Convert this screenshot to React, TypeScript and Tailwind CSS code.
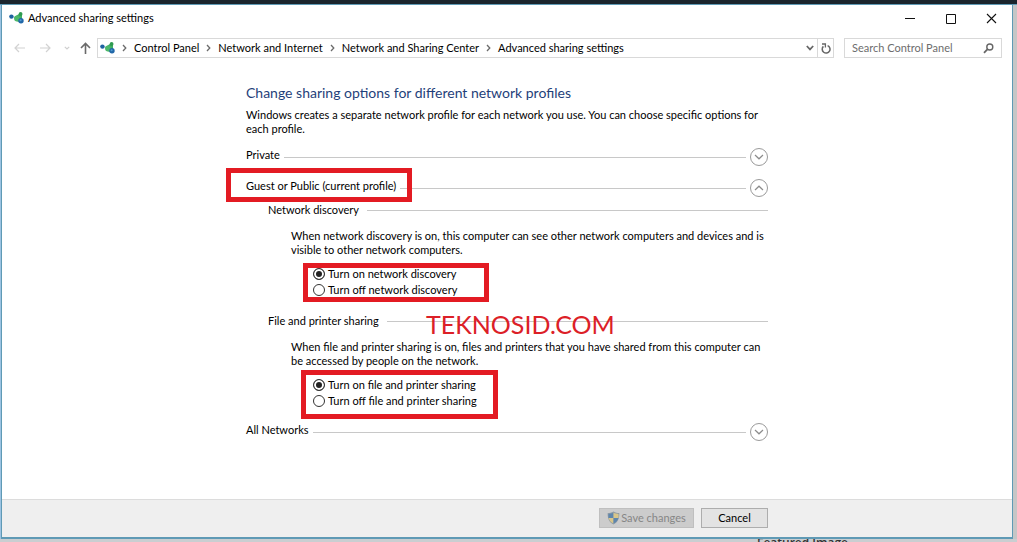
import React from "react";

function NetworkIcon() {
  return (
    <svg width="15" height="13" viewBox="0 0 15 13" className="shrink-0" aria-hidden="true">
      <path d="M2.5 4.5 L8 6" stroke="#9ccbd6" strokeWidth="1" />
      <path d="M10.5 1.5 L13 2 L13 8 L10 10 L6 8.5 L5.5 5 Z" fill="#3fae62" />
      <circle cx="8" cy="6.5" r="2.9" fill="#4cb86a" />
      <circle cx="2.4" cy="4.6" r="2.2" fill="#1f62a0" />
      <circle cx="11.6" cy="2" r="1.9" fill="#2f9a50" />
      <circle cx="12" cy="8.8" r="2.7" fill="#2167a8" />
      <circle cx="11.6" cy="8.2" r="1" fill="#4f9bd0" />
    </svg>
  );
}

function ShieldIcon() {
  return (
    <svg width="13" height="14" viewBox="0 0 13 14" className="shrink-0" aria-hidden="true">
      <path d="M6.5 0.5 C8.5 1.8 10.5 2 12.3 2 C12.6 7 11 11.2 6.5 13.5 C2 11.2 0.4 7 0.7 2 C2.5 2 4.5 1.8 6.5 0.5Z" fill="#8f9ba5" />
      <path d="M6.5 1.6 V7 H1.6 C1.4 5.6 1.4 4.2 1.5 2.9 C3.4 2.9 5 2.6 6.5 1.6Z" fill="#5f86ad" />
      <path d="M6.5 1.6 V7 H11.4 C11.6 5.6 11.6 4.2 11.5 2.9 C9.6 2.9 8 2.6 6.5 1.6Z" fill="#d9c68a" />
      <path d="M1.6 7 H6.5 V12.5 C3.8 11.2 2.2 9.4 1.6 7Z" fill="#d9c68a" />
      <path d="M11.4 7 H6.5 V12.5 C9.2 11.2 10.8 9.4 11.4 7Z" fill="#5f86ad" />
    </svg>
  );
}

function Crumb({ children }: { children: string }) {
  return (
    <>
      <svg width="5" height="8" viewBox="0 0 5 8" className="shrink-0" aria-hidden="true">
        <path d="M1 1 L3.8 4 L1 7" fill="none" stroke="#6b6b6b" strokeWidth="1.3" />
      </svg>
      <a href="#" className="whitespace-nowrap">
        {children}
      </a>
    </>
  );
}

function ProfileRow({
  title,
  open,
  boxed,
  className,
}: {
  title: string;
  open?: boolean;
  boxed?: boolean;
  className: string;
}) {
  return (
    <div className={`flex h-[18px] items-start ${className}`}>
      <h2 className="relative mr-1 whitespace-nowrap leading-[14px]">
        {title}
        {boxed && (
          <span className="pointer-events-none absolute -top-[11px] -right-4 -bottom-[9px] -left-5 z-10 border-5 border-[#e31b23]" />
        )}
      </h2>
      <span className="mr-1 h-px flex-1 self-center bg-[#c8c8c8]" />
      <button
        type="button"
        aria-label={title}
        aria-expanded={!!open}
        className="flex size-[18px] items-center justify-center rounded-full border border-[#9a9a9a]"
      >
        <svg width="10" height="6" viewBox="0 0 10 6" aria-hidden="true">
          <path
            d={open ? "M1 5 L5 1.2 L9 5" : "M1 1 L5 4.8 L9 1"}
            fill="none"
            stroke="#8c8c8c"
            strokeWidth="1.2"
          />
        </svg>
      </button>
    </div>
  );
}

function Option({ name, label, checked }: { name: string; label: string; checked?: boolean }) {
  return (
    <label className="flex h-4 items-center gap-[3px]">
      <input
        type="radio"
        name={name}
        defaultChecked={checked}
        className="size-3 shrink-0 appearance-none rounded-full border border-[#333] bg-white checked:bg-[#222] checked:shadow-[inset_0_0_0_2px_white]"
      />
      <span className="whitespace-nowrap">{label}</span>
    </label>
  );
}

function Section({
  title,
  text,
  name,
  on,
  off,
  box,
  className,
  watermark,
}: {
  title: string;
  text: string;
  name: string;
  on: string;
  off: string;
  box: string;
  className: string;
  watermark?: string;
}) {
  return (
    <section className={`ml-[22px] ${className}`}>
      <div className="relative flex h-[14px] items-center gap-2">
        <h3 className="whitespace-nowrap leading-[14px]">{title}</h3>
        <span className="h-px flex-1 bg-[#c8c8c8]" />
        {watermark && (
          <span className="absolute top-[-5px] left-[158px] text-[25px] leading-[30px] text-[#dc2027]">
            {watermark}
          </span>
        )}
      </div>
      <p className="mt-3 ml-[23px] leading-[14px]">{text}</p>
      <div className="relative mt-[9px] ml-[45px] w-fit">
        <Option name={name} label={on} checked />
        <Option name={name} label={off} />
        <span className={`pointer-events-none absolute border-5 border-[#e31b23] ${box}`} />
      </div>
    </section>
  );
}

export default function App() {
  return (
    <div className="flex min-h-screen flex-col bg-[#c9ced1] font-['Lato','Open_Sans',sans-serif] text-[11px] text-black">
      <div className="h-[5px] border-b border-[#5f9ab5] bg-[#1b252d]" />
      <div className="flex flex-1">
        <div className="w-px bg-[#9cc3e2]" />
        <main className="flex min-w-0 flex-1 flex-col border border-t-0 border-b-2 border-[#5f9ab5] bg-white">
          <header className="flex h-[27px] items-center pl-[7px]">
            <NetworkIcon />
            <h1 className="ml-1 flex-1">Advanced sharing settings</h1>
            <button type="button" aria-label="Minimize" className="flex w-[41px] justify-center">
              <svg width="10" height="11" viewBox="0 0 10 11">
                <path d="M0 5.5 H10" stroke="#111" />
              </svg>
            </button>
            <button type="button" aria-label="Maximize" className="flex w-[41px] justify-center">
              <svg width="10" height="10" viewBox="0 0 10 10">
                <path d="M0.5 0.5 H9.5 V9.5 H0.5 Z" fill="none" stroke="#111" />
              </svg>
            </button>
            <button type="button" aria-label="Close" className="flex w-[41px] justify-center">
              <svg width="11" height="11" viewBox="0 0 11 11">
                <path d="M1 1 L10 10 M10 1 L1 10" stroke="#111" strokeWidth="1.1" />
              </svg>
            </button>
          </header>

          <nav className="mt-[6px] flex h-5 items-center pr-[10px] pl-3">
            <button type="button" aria-label="Back">
              <svg width="11" height="10" viewBox="0 0 11 10">
                <path d="M11 5 H1 M5 1 L1 5 L5 9" fill="none" stroke="#d2d2d2" strokeWidth="1.2" />
              </svg>
            </button>
            <button type="button" aria-label="Forward" className="ml-[15px]">
              <svg width="11" height="10" viewBox="0 0 11 10">
                <path d="M0 5 H10 M6 1 L10 5 L6 9" fill="none" stroke="#d2d2d2" strokeWidth="1.2" />
              </svg>
            </button>
            <button type="button" aria-label="Recent locations" className="ml-[13px]">
              <svg width="6" height="4" viewBox="0 0 6 4">
                <path d="M0.8 0.8 L3 3 L5.2 0.8" fill="none" stroke="#cfcfcf" strokeWidth="1.2" />
              </svg>
            </button>
            <button type="button" aria-label="Up" className="ml-[10px]">
              <svg width="11" height="12" viewBox="0 0 11 12">
                <path d="M5.5 12 V1.5 M1 6 L5.5 1.5 L10 6" fill="none" stroke="#6a6a6a" strokeWidth="1.6" />
              </svg>
            </button>
            <div className="ml-[6px] flex h-5 min-w-0 flex-1 items-center border border-[#d9d9d9]">
              <div className="flex min-w-0 flex-1 items-center gap-[7px] pl-[2px]">
                <NetworkIcon />
                <Crumb>Control Panel</Crumb>
                <Crumb>Network and Internet</Crumb>
                <Crumb>Network and Sharing Center</Crumb>
                <Crumb>Advanced sharing settings</Crumb>
              </div>
              <button type="button" aria-label="Previous locations" className="px-[3px]">
                <svg width="8" height="6" viewBox="0 0 8 6">
                  <path d="M0.8 1 L4 4.4 L7.2 1" fill="none" stroke="#666" strokeWidth="1.7" />
                </svg>
              </button>
              <button
                type="button"
                aria-label="Refresh"
                className="flex h-full w-4 items-center justify-center border-l border-[#d9d9d9]"
              >
                <svg width="10" height="11" viewBox="0 0 10 11">
                  <path d="M6.6 2.6 A3.9 3.9 0 1 1 2.4 3.4" fill="none" stroke="#666" strokeWidth="1.5" />
                  <path d="M1 1 H4.4 V4.6" fill="none" stroke="#666" strokeWidth="1.3" />
                </svg>
              </button>
            </div>
            <div className="ml-[10px] flex h-5 w-[158px] items-center border border-[#d9d9d9] pr-[7px] pl-[7px]">
              <input
                type="search"
                aria-label="Search Control Panel"
                placeholder="Search Control Panel"
                className="min-w-0 flex-1 outline-none placeholder:text-[#6d6d6d]"
              />
              <svg width="11" height="11" viewBox="0 0 11 11" aria-hidden="true">
                <circle cx="6.8" cy="4" r="3" fill="none" stroke="#666" strokeWidth="1.4" />
                <path d="M4.6 6.2 L1 9.8" stroke="#666" strokeWidth="1.8" />
              </svg>
            </div>
          </nav>

          <div className="mx-auto mt-[25px] w-full max-w-[522px] flex-1 pb-4">
            <h2 className="text-[14px] leading-5 text-[#1f3f7a]">
              Change sharing options for different network profiles
            </h2>
            <p className="mt-[5px] leading-[14px]">
              Windows creates a separate network profile for each network you use. You can choose specific options for
              each profile.
            </p>
            <ProfileRow title="Private" className="mt-3" />
            <ProfileRow title="Guest or Public (current profile)" open boxed className="mt-[13px]" />
            <Section
              title="Network discovery"
              text="When network discovery is on, this computer can see other network computers and devices and is visible to other network computers."
              name="discovery"
              on="Turn on network discovery"
              off="Turn off network discovery"
              box="-top-[3px] -right-8 -bottom-1 -left-[10px]"
              className="mt-[6px]"
            />
            <Section
              title="File and printer sharing"
              text="When file and printer sharing is on, files and printers that you have shared from this computer can be accessed by people on the network."
              name="sharing"
              on="Turn on file and printer sharing"
              off="Turn off file and printer sharing"
              box="-top-[7px] -right-[21px] -bottom-[10px] -left-3"
              className="mt-4"
              watermark="TEKNOSID.COM"
            />
            <ProfileRow title="All Networks" className="mt-[14px]" />
          </div>

          <footer className="border-t border-[#dcdcdc] bg-[#efefef] pt-2 pb-[9px]">
            <div className="mx-auto flex w-full max-w-[522px] justify-end gap-[7px]">
              <button
                type="button"
                disabled
                className="flex h-5 w-[95px] items-center justify-center gap-px border border-[#bfbfbf] bg-[#cccccc] text-[#868686]"
              >
                <ShieldIcon />
                Save changes
              </button>
              <button type="button" className="h-5 w-[67px] border border-[#adadad] bg-[#e3e3e3]">
                Cancel
              </button>
            </div>
          </footer>
        </main>
        <div className="w-1 bg-[#c6c6c6]" />
      </div>
      <div className="flex h-[3px] justify-end overflow-hidden pr-[169px]">
        <span className="-mt-[2px] font-['Open_Sans',sans-serif] text-[12px] leading-3 font-semibold text-[#333]">
          Featured Image
        </span>
      </div>
    </div>
  );
}
